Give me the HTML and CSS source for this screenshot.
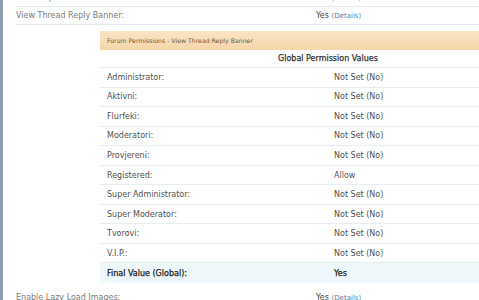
FILE: index.html
```html
<!DOCTYPE html>
<html lang="en">
<head>
    <meta charset="UTF-8">
    <title>Permissions - View Thread Reply Banner</title>
    <link rel="stylesheet" href="styles.css">
</head>
<body>
    <div class="strip"></div>
    <div class="main">
        <div class="option first">
            <div class="opt-label">Vote on polls:</div>
            <div class="opt-value">Yes <span class="details">(Details)</span></div>
        </div>
        <div class="option">
            <div class="opt-label">View Thread Reply Banner:</div>
            <div class="opt-value">Yes <span class="details">(Details)</span></div>
        </div>
        <div class="perm-box">
            <div class="perm-head">Forum Permissions - View Thread Reply Banner</div>
            <div class="perm-row heading">
                <div></div>
                <div class="col-title">Global Permission Values</div>
            </div>
            <div class="perm-row"><div>Administrator:</div><div>Not Set (No)</div></div>
            <div class="perm-row"><div>Aktivni:</div><div>Not Set (No)</div></div>
            <div class="perm-row"><div>Flurfeki:</div><div>Not Set (No)</div></div>
            <div class="perm-row"><div>Moderatori:</div><div>Not Set (No)</div></div>
            <div class="perm-row"><div>Provjereni:</div><div>Not Set (No)</div></div>
            <div class="perm-row"><div>Registered:</div><div>Allow</div></div>
            <div class="perm-row"><div>Super Administrator:</div><div>Not Set (No)</div></div>
            <div class="perm-row"><div>Super Moderator:</div><div>Not Set (No)</div></div>
            <div class="perm-row"><div>Tvorovi:</div><div>Not Set (No)</div></div>
            <div class="perm-row"><div>V.I.P.:</div><div>Not Set (No)</div></div>
            <div class="perm-row final"><div>Final Value (Global):</div><div>Yes</div></div>
        </div>
        <div class="option last">
            <div class="opt-label">Enable Lazy Load Images:</div>
            <div class="opt-value">Yes <span class="details">(Details)</span></div>
        </div>
    </div>
</body>
</html>
```

FILE: styles.css
```css
body {
    margin: 0;
    display: flex;
    height: 300px;
    overflow: hidden;
    background: #fff;
    font-family: "DejaVu Sans", Verdana, sans-serif;
    font-size: 8px;
    color: #555;
}
.strip {
    width: 3px;
    flex: none;
    background: #8d9cae;
}
.main {
    flex: 1;
    padding-left: 13px;
}
.option {
    display: grid;
    grid-template-columns: 300px 1fr;
    align-items: center;
    height: 17px;
    border-bottom: 1px solid #e4ebf0;
    color: #7a7a7a;
}
.option.first {
    margin-top: -11px;
}
.option.last {
    border-bottom: none;
    margin-top: 6px;
}
.opt-value {
    color: #444;
}
.details {
    font-size: 7px;
    color: #5a7ea6;
}
.perm-box {
    margin-left: 84px;
    margin-top: 6px;
}
.perm-head {
    height: 19px;
    line-height: 19px;
    padding-left: 7px;
    font-size: 6.2px;
    color: #6d5b3c;
    background: linear-gradient(#fae4c5, #f6d6a9);
}
.perm-row {
    display: grid;
    grid-template-columns: 227px 1fr;
    align-items: center;
    box-sizing: border-box;
    height: 19.55px;
    padding-left: 7px;
    border-bottom: 1px solid #e6eef2;
    color: #505050;
}
.perm-row.heading {
    height: 18px;
}
.col-title {
    margin-left: -56px;
    color: #333;
    -webkit-text-stroke: 0.25px #333;
}
.perm-row.final {
    background: #eef7fa;
    border-bottom: none;
    color: #222;
    -webkit-text-stroke: 0.25px #222;
}
```
